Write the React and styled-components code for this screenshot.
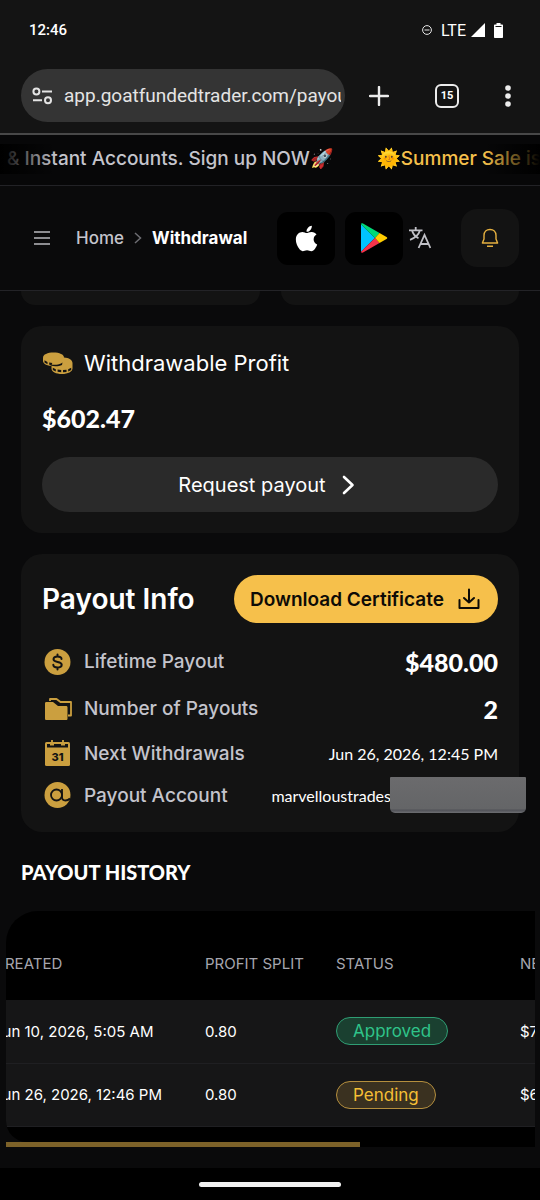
import { useLayoutEffect, useRef } from 'react'
import styled, { createGlobalStyle } from 'styled-components'
import { FaApple } from 'react-icons/fa'

const theme = {
  colors: {
    chrome: '#141414',
    page: '#0a0a0b',
    card: '#131313',
    gold: '#cb9f3f',
    primary: '#f6c04b',
    text: '#ffffff',
    muted: '#c4c4cc'
  },
  fonts: {
    body: "Inter, 'Open Sans', sans-serif",
    system: "Roboto, 'Liberation Sans', sans-serif",
    display: "Lato, 'Open Sans', sans-serif"
  }
}

const GlobalStyle = createGlobalStyle`
  * {
    box-sizing: border-box;
  }

  body {
    margin: 0;
    background-color: ${theme.colors.page};
    color: ${theme.colors.text};
    font-family: ${theme.fonts.body};
  }

  button {
    border: none;
    background: none;
    padding: 0;
    color: inherit;
    font-family: inherit;
    cursor: pointer;
  }

  h1, h2, p {
    margin: 0;
  }

  svg {
    display: block;
    flex-shrink: 0;
  }
`

const Screen = styled.div`
  min-height: 100vh;
  display: flex;
  flex-direction: column;
  overflow: hidden;
`

const BrowserChrome = styled.header`
  background-color: ${theme.colors.chrome};
  border-bottom: 2px solid #484848;
  font-family: ${theme.fonts.system};
`

const StatusBar = styled.div`
  display: flex;
  align-items: center;
  justify-content: space-between;
  height: 60px;
  padding: 0 37px 0 29px;
  font-size: 15px;
  font-weight: 500;
`

const StatusIcons = styled.div`
  display: flex;
  align-items: center;
  gap: 9px;

  span {
    margin-right: -4px;
    font-size: 16px;
    font-weight: 400;
  }
`

const AddressRow = styled.div`
  display: flex;
  align-items: center;
  padding: 9px 21px 11px;
`

const AddressPill = styled.label`
  display: flex;
  align-items: center;
  gap: 11px;
  flex: 1;
  min-width: 0;
  height: 53px;
  padding: 0 4px 0 11px;
  border-radius: 27px;
  background-color: #343434;
`

const AddressInput = styled.input`
  flex: 1;
  min-width: 0;
  padding: 0;
  border: none;
  outline: none;
  background: none;
  color: #e4e4e4;
  font-family: ${theme.fonts.system};
  font-size: 19px;
`

const BrowserActions = styled.div`
  display: flex;
  align-items: center;
  justify-content: space-between;
  width: 174px;
  padding: 0 8px 0 24px;
`

const TabsButton = styled.button`
  width: 24px;
  height: 24px;
  border: 2px solid #ececec;
  border-radius: 6px;
  font-size: 11px;
  font-weight: 700;
  line-height: 20px;
`

const Marquee = styled.div`
  position: relative;
  display: flex;
  align-items: center;
  gap: 43px;
  height: 51px;
  padding: 0 0 3px 7px;
  border-bottom: 1px solid #222226;
  overflow: hidden;
  white-space: nowrap;
  font-size: 19px;
  font-weight: 500;
  background-color: #070708;

  &::before,
  &::after {
    content: '';
    position: absolute;
    top: 9px;
    bottom: 11px;
    width: 56px;
  }

  &::before {
    left: 0;
    background: linear-gradient(to right, #000000, transparent);
  }

  &::after {
    right: 0;
    background: linear-gradient(to left, #000000, transparent);
  }
`

const MarqueeText = styled.span`
  color: ${props => props.$highlight ? theme.colors.primary : theme.colors.muted};
`

const AppHeader = styled.div`
  display: flex;
  align-items: center;
  height: 105px;
  padding: 0 21px 0 33px;
  border-bottom: 1px solid #232327;
`

const Breadcrumb = styled.nav`
  display: flex;
  align-items: center;
  gap: 10px;
  margin-left: 25px;
  font-size: 17px;
  font-weight: 500;

  a {
    color: ${theme.colors.muted};
    text-decoration: none;
  }

  strong {
    font-weight: 700;
  }
`

const HeaderActions = styled.div`
  display: flex;
  align-items: center;
  margin-left: auto;
`

const StoreButton = styled.button`
  display: flex;
  align-items: center;
  justify-content: center;
  width: 58px;
  height: 53px;
  margin-right: ${props => props.$last ? '6px' : '10px'};
  border-radius: 11px;
  background-color: #000000;
`

const BellButton = styled.button`
  display: flex;
  align-items: center;
  justify-content: center;
  width: 58px;
  height: 58px;
  margin-left: 30px;
  border-radius: 16px;
  background-color: ${theme.colors.card};
`

const Content = styled.main`
  flex: 1;
  padding: 0 21px 21px;
`

const StatRow = styled.div`
  display: grid;
  grid-template-columns: 1fr 1fr;
  gap: 21px;
  margin-bottom: 21px;
`

const StatEnd = styled.div`
  height: 14px;
  border-radius: 0 0 21px 21px;
  background-color: ${theme.colors.card};
`

const Card = styled.section`
  margin-bottom: 21px;
  padding: ${props => props.$compact ? '21px 21px 16px' : '21px'};
  border-radius: 21px;
  background-color: ${theme.colors.card};
`

const ProfitTitle = styled.h2`
  display: flex;
  align-items: center;
  gap: 11px;
  font-size: 22px;
  font-weight: 400;
  line-height: 32px;
`

const ProfitValue = styled.p`
  margin: 23px 0;
  font-family: ${theme.fonts.display};
  font-size: 25px;
  font-weight: 900;
  line-height: 32px;
`

const RequestButton = styled.button`
  display: flex;
  align-items: center;
  justify-content: center;
  gap: 12px;
  width: 100%;
  height: 55px;
  border-radius: 28px;
  background-color: #2a2a2a;
  font-size: 20px;
`

const InfoHead = styled.div`
  display: flex;
  align-items: center;
  justify-content: space-between;
  margin-bottom: 15px;

  h2 {
    font-size: 28px;
    font-weight: 600;
  }
`

const DownloadButton = styled.button`
  display: flex;
  align-items: center;
  gap: 14px;
  height: 48px;
  padding: 0 18px 0 16px;
  border-radius: 24px;
  background-color: ${theme.colors.primary};
  color: #0d0b06;
  font-size: 19px;
  font-weight: 600;
`

const InfoRow = styled.div`
  display: flex;
  align-items: center;
  justify-content: space-between;
  height: ${props => props.$tall ? '47px' : '42px'};
`

const InfoLabel = styled.span`
  display: flex;
  align-items: center;
  gap: 11px;
  color: ${theme.colors.muted};
  font-size: 19px;
  font-weight: 500;
`

const InfoValue = styled.span`
  position: relative;
  font-family: ${theme.fonts.display};
  font-size: ${props => props.$large ? '25px' : '16px'};
  font-weight: ${props => props.$large ? 900 : 400};
  padding-right: ${props => props.$masked ? '107px' : 0};
`

const Redaction = styled.span`
  position: absolute;
  top: -9px;
  right: -28px;
  width: 136px;
  height: 36px;
  border-radius: 1px 1px 5px 5px;
  background: linear-gradient(#6b6b6d 0, #646567 32px, #505157 33px, #6d6e72 36px);
`

const HistoryTitle = styled.h2`
  font-family: ${theme.fonts.display};
  font-size: 20px;
  font-weight: 900;
  line-height: 38px;
`

const HistoryPanel = styled.section`
  margin: 20px -16px 0 -15px;
  border-radius: 32px 0 0 21px;
  background-color: #000000;
  overflow: hidden;
`

const TableScroller = styled.div`
  padding-bottom: 15px;
  overflow-x: auto;
  scrollbar-width: none;
`

const HistoryTable = styled.table`
  width: 788px;
  table-layout: fixed;
  border-collapse: collapse;
  text-align: left;
  white-space: nowrap;
  font-size: 15px;

  th {
    height: 89px;
    padding: 15px 16px 0;
    color: #a6a6ae;
    font-weight: 400;
  }

  td {
    height: 63px;
    padding: 0 16px;
    border-bottom: 1px solid #1f1f22;
    background-color: #161617;
  }
`

const StatusBadge = styled.span`
  display: inline-block;
  padding: 0 16px;
  border: 1px solid;
  border-radius: 14px;
  line-height: 26px;
  font-size: 17px;
  color: ${props => props.$status === 'Approved' ? '#2fc48a' : '#f5bf35'};
  border-color: ${props => props.$status === 'Approved' ? '#2f9e74' : '#b58f3e'};
  background-color: ${props => props.$status === 'Approved' ? '#1a4030' : '#3a3120'};
`

const ScrollTrack = styled.div`
  height: 5px;
  margin: 0 -16px 0 -15px;
  background-color: #000000;
`

const ScrollThumb = styled.div`
  width: 67%;
  height: 100%;
  background-color: #7d6229;
`

const GestureBar = styled.footer`
  display: flex;
  justify-content: center;
  padding: 14px 0 13px;
  background-color: #000000;
`

const GestureHandle = styled.span`
  width: 142px;
  height: 5px;
  border-radius: 3px;
  background-color: #f1f1f1;
`

const SiteInfoIcon = () => (
  <svg width="21" height="18" viewBox="0 0 21 18" fill="none" stroke="#e4e4e4" strokeWidth="2">
    <circle cx="4.4" cy="4.4" r="3" />
    <path d="M10 4.4h10M1 13.2h9" />
    <circle cx="16" cy="13.2" r="3" />
  </svg>
)

const PlayIcon = () => (
  <svg width="28" height="30" viewBox="0 0 28 30">
    <path d="M1 1.2v27.6L15 15z" fill="#00c3ff" />
    <path d="M1 1.2C1 .2 2 0 3 .6l16.5 9.4L15 15z" fill="#00d977" />
    <path d="M1 28.8c0 1 1 1.2 2 .6l16.5-9.4L15 15z" fill="#f5334a" />
    <path d="M19.5 10l7 4c1 .6 1 1.4 0 2l-7 4L15 15z" fill="#ffcd00" />
  </svg>
)

const TranslateIcon = () => (
  <svg width="22" height="22" viewBox="0 0 22 22" fill="none" stroke="#c0c0c6" strokeWidth="1.8">
    <path d="M0 3.3h13.5M6.7 0v3.3M11 3.3C9.8 7.6 6 11 1 12.8M3 3.3C4 7.3 6.5 9.8 9.5 11.3" />
    <path d="M9.6 21L15.5 8l5.9 13M11.5 17h8" />
  </svg>
)

const BellIcon = () => (
  <svg width="18" height="20" viewBox="0 0 18 20" fill="none" stroke="#e5b040" strokeWidth="1.4" strokeLinejoin="round">
    <path d="M3 7.5C3 3.8 5.5 1.5 9 1.5s6 2.3 6 6V11l1.6 4H1.4L3 11zM6 18.2h6" />
  </svg>
)

const CoinsIcon = () => (
  <svg width="31" height="24" viewBox="0 0 31 24">
    <path d="M1 6.5C1 3.5 5.500 1.5 11.5 1.5S22 3.5 22 6.5V10c0 3-4.5 5.2-10.5 5.2S1 13 1 10z" fill={theme.colors.gold} />
    <g fill={theme.colors.card}>
      <path d="M2.5 9.3l3 1.6v2.3l-3-1.7zM7.2 11.4l3.3.5v2.3l-3.3-.5zM12.2 12h3.3v2l-3.3.3zM17.2 11.3l3-1.3v2l-3 1.3z" />
    </g>
    <path d="M9.5 14.5c0-1 .5-2 1.5-2.7 2-.8 4-1.3 6-2.3l5-3c5 .3 8.500 2.500 8.500 5.500v5.500c0 3-4.500 5.500-10.500 5.500s-10.500-2.200-10.500-5.500z" fill={theme.colors.gold} />
    <g fill={theme.colors.card}>
      <path d="M8.5 13.2c3 1 7.5.8 10.500-.6l1.500-1-.5 2.400c-3 1.300-7.500 1.700-11.500.5z" />
      <path d="M10.8 16.8l3 1.4v2.3l-3-1.5zM15.6 18.6l3.6.4v2.200l-3.600-.4zM21 19l3.500-.3v2.200l-3.500.3zM26.200 18.200l3-1.400v2.300l-3 1.400z" />
    </g>
  </svg>
)

const DollarIcon = () => (
  <svg width="31" height="28" viewBox="0 0 31 28" fill="none">
    <circle cx="15.5" cy="14" r="13" fill={theme.colors.gold} />
    <path d="M19.5 11c0-1.500-1.500-2.500-4-2.500s-4 1-4 2.800c0 3.800 8.200 1.700 8.200 5.400 0 1.800-1.700 2.800-4.200 2.800s-4.200-1-4.200-2.700M15.500 6.500v2M15.500 19.500v2" stroke={theme.colors.card} strokeWidth="2" strokeLinecap="round" />
  </svg>
)

const FolderIcon = () => (
  <svg width="31" height="24" viewBox="0 0 31 24">
    <path d="M8 4V2h6.5l4 3H29v13.5h-3" fill="none" stroke={theme.colors.gold} strokeWidth="1.8" strokeLinejoin="round" />
    <path d="M3 6.500C3 5.500 3.500 5 4.500 5H11l5 4h8c1 0 1.500.5 1.500 1.500v11c0 1-.5 1.500-1.500 1.500H4.500c-1 0-1.500-.5-1.500-1.500z" fill={theme.colors.gold} />
  </svg>
)

const CalendarIcon = () => (
  <svg width="31" height="28" viewBox="0 0 31 28">
    <rect x="3" y="3" width="25" height="24" rx="1.5" fill={theme.colors.gold} />
    <path d="M5 5h3v1.5h4V5h7v1.5h4V5h3v3.5H5z" fill={theme.colors.card} />
    <path d="M10 1v5M21 1v5" stroke={theme.colors.gold} strokeWidth="1.8" />
    <text x="15.5" y="22" textAnchor="middle" fontFamily="Inter, sans-serif" fontSize="11" fontWeight="800" fill={theme.colors.card}>31</text>
  </svg>
)

const AtIcon = () => (
  <svg width="31" height="28" viewBox="0 0 31 28" fill="none">
    <circle cx="15.5" cy="14" r="13" fill={theme.colors.gold} />
    <circle cx="14.5" cy="14" r="5.5" stroke={theme.colors.card} strokeWidth="1.8" />
    <path d="M20 8v8c0 2.5 1.5 3.5 3.5 3.5 1.5 0 3-.5 4.500-2" stroke={theme.colors.card} strokeWidth="1.8" />
  </svg>
)

const infoRows = [
  { label: 'Lifetime Payout', value: '$480.00', icon: DollarIcon, large: true },
  { label: 'Number of Payouts', value: '2', icon: FolderIcon, large: true },
  { label: 'Next Withdrawals', value: 'Jun 26, 2026, 12:45 PM', icon: CalendarIcon },
  { label: 'Payout Account', value: 'marvelloustrades', icon: AtIcon, masked: true }
]

const payouts = [
  { created: 'Jun 10, 2026, 5:05 AM', split: '0.80', status: 'Approved', net: '$7' },
  { created: 'Jun 26, 2026, 12:46 PM', split: '0.80', status: 'Pending', net: '$6' }
]

const PayoutHistory = () => {
  const scroller = useRef(null)

  useLayoutEffect(() => {
    scroller.current.scrollLeft = 28
  }, [])

  return (
    <>
      <HistoryTitle>PAYOUT HISTORY</HistoryTitle>
      <HistoryPanel>
        <TableScroller ref={scroller}>
          <HistoryTable>
            <colgroup>
              <col width="211" />
              <col width="131" />
              <col width="184" />
              <col />
            </colgroup>
            <thead>
              <tr>
                <th>CREATED</th>
                <th>PROFIT SPLIT</th>
                <th>STATUS</th>
                <th>NET</th>
              </tr>
            </thead>
            <tbody>
              {payouts.map(payout => (
                <tr key={payout.created}>
                  <td>{payout.created}</td>
                  <td>{payout.split}</td>
                  <td><StatusBadge $status={payout.status}>{payout.status}</StatusBadge></td>
                  <td>{payout.net}</td>
                </tr>
              ))}
            </tbody>
          </HistoryTable>
        </TableScroller>
      </HistoryPanel>
      <ScrollTrack>
        <ScrollThumb />
      </ScrollTrack>
    </>
  )
}

export default function App() {
  return (
    <Screen>
      <GlobalStyle />
      <BrowserChrome>
        <StatusBar>
          12:46
          <StatusIcons>
            <svg width="10" height="10" viewBox="0 0 10 10" fill="none" stroke="#e8e8e8">
              <circle cx="5" cy="5" r="4.4" />
              <path d="M2.5 5h5" />
            </svg>
            <span>LTE</span>
            <svg width="14" height="14" viewBox="0 0 14 14" fill="#ffffff">
              <path d="M14 0v14H0z" />
            </svg>
            <svg width="9" height="15" viewBox="0 0 9 15" fill="#ffffff">
              <path d="M2.5 0h4v1.5H8c.6 0 1 .4 1 1V14c0 .6-.4 1-1 1H1c-.6 0-1-.4-1-1V2.5c0-.6.4-1 1-1h1.5z" />
              <path d="M1.5 3.5h6" stroke={theme.colors.chrome} />
            </svg>
          </StatusIcons>
        </StatusBar>
        <AddressRow>
          <AddressPill>
            <SiteInfoIcon />
            <AddressInput aria-label="Address" defaultValue="app.goatfundedtrader.com/payouts" />
          </AddressPill>
          <BrowserActions>
            <button aria-label="New tab">
              <svg width="20" height="20" viewBox="0 0 20 20" stroke="#ececec" strokeWidth="2.4" strokeLinecap="round">
                <path d="M10 1v18M1 10h18" />
              </svg>
            </button>
            <TabsButton>15</TabsButton>
            <button aria-label="Menu">
              <svg width="6" height="22" viewBox="0 0 6 22" fill="#ececec">
                <circle cx="3" cy="3" r="2.8" />
                <circle cx="3" cy="11" r="2.8" />
                <circle cx="3" cy="19" r="2.8" />
              </svg>
            </button>
          </BrowserActions>
        </AddressRow>
      </BrowserChrome>

      <Marquee>
        <MarqueeText>&amp; Instant Accounts. Sign up NOW🚀</MarqueeText>
        <MarqueeText $highlight>🌞Summer Sale is live</MarqueeText>
      </Marquee>

      <AppHeader>
        <button aria-label="Open menu">
          <svg width="18" height="16" viewBox="0 0 18 16" stroke="#b9b9bf" strokeWidth="1.6">
            <path d="M1 2h16M1 8h16M1 14h16" />
          </svg>
        </button>
        <Breadcrumb>
          <a href="#home">Home</a>
          <svg width="8" height="12" viewBox="0 0 8 12" fill="none" stroke="#6d6d72" strokeWidth="1.5">
            <path d="M1 1l5.5 5L1 11" />
          </svg>
          <strong>Withdrawal</strong>
        </Breadcrumb>
        <HeaderActions>
          <StoreButton aria-label="App Store">
            <FaApple size={29} />
          </StoreButton>
          <StoreButton aria-label="Google Play" $last>
            <PlayIcon />
          </StoreButton>
          <button aria-label="Language">
            <TranslateIcon />
          </button>
          <BellButton aria-label="Notifications">
            <BellIcon />
          </BellButton>
        </HeaderActions>
      </AppHeader>

      <Content>
        <StatRow>
          <StatEnd />
          <StatEnd />
        </StatRow>

        <Card>
          <ProfitTitle><CoinsIcon />Withdrawable Profit</ProfitTitle>
          <ProfitValue>$602.47</ProfitValue>
          <RequestButton>
            Request payout
            <svg width="24" height="24" viewBox="0 0 24 24" fill="none" stroke="#ffffff" strokeWidth="2.6" strokeLinecap="round" strokeLinejoin="round">
              <path d="M6 4l8.5 8L6 20" />
            </svg>
          </RequestButton>
        </Card>

        <Card $compact>
          <InfoHead>
            <h2>Payout Info</h2>
            <DownloadButton>
              Download Certificate
              <svg width="22" height="22" viewBox="0 0 22 22" fill="none" stroke="currentColor" strokeWidth="2" strokeLinecap="round" strokeLinejoin="round">
                <path d="M11 1.5v13M6 10l5 4.5 5-4.5M1.5 12v8h19v-8" />
              </svg>
            </DownloadButton>
          </InfoHead>
          {infoRows.map(({ label, value, icon: Icon, large, masked }) => (
            <InfoRow key={label} $tall={large}>
              <InfoLabel><Icon />{label}</InfoLabel>
              <InfoValue $large={large} $masked={masked}>
                {value}
                {masked && <Redaction />}
              </InfoValue>
            </InfoRow>
          ))}
        </Card>

        <PayoutHistory />
      </Content>

      <GestureBar>
        <GestureHandle />
      </GestureBar>
    </Screen>
  )
}
